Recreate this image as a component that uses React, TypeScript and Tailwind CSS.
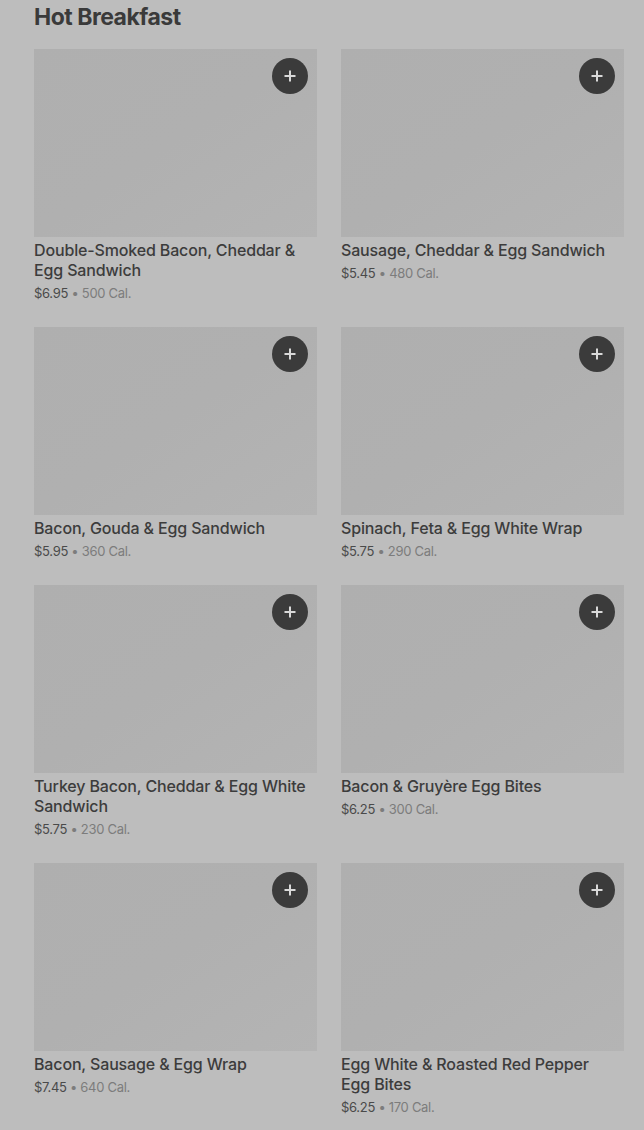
const items = [
  { name: 'Double-Smoked Bacon, Cheddar & Egg Sandwich', price: '$6.95', cal: '500 Cal.' },
  { name: 'Sausage, Cheddar & Egg Sandwich', price: '$5.45', cal: '480 Cal.' },
  { name: 'Bacon, Gouda & Egg Sandwich', price: '$5.95', cal: '360 Cal.' },
  { name: 'Spinach, Feta & Egg White Wrap', price: '$5.75', cal: '290 Cal.' },
  { name: 'Turkey Bacon, Cheddar & Egg White Sandwich', price: '$5.75', cal: '230 Cal.' },
  { name: 'Bacon & Gruyère Egg Bites', price: '$6.25', cal: '300 Cal.' },
  { name: 'Bacon, Sausage & Egg Wrap', price: '$7.45', cal: '640 Cal.' },
  { name: 'Egg White & Roasted Red Pepper Egg Bites', price: '$6.25', cal: '170 Cal.' },
]

function PlusIcon() {
  return (
    <svg width="14" height="14" viewBox="0 0 14 14" fill="none">
      <path d="M7 1.5v11M1.5 7h11" stroke="#d9d9d9" strokeWidth="2" />
    </svg>
  )
}

function ItemCard({ name, price, cal }: { name: string; price: string; cal: string }) {
  return (
    <div className="flex flex-col">
      <div className="relative h-[188px] w-full bg-gradient-to-br from-[#afafaf] via-[#b0b0b0] to-[#b4b4b4]">
        <button
          type="button"
          className="absolute right-[9px] top-[9px] flex h-9 w-9 items-center justify-center rounded-full bg-[#3b3b3b]"
        >
          <PlusIcon />
        </button>
      </div>
      <div className="mt-[3px] pr-[6px] text-[16px] font-medium leading-5 tracking-[-0.15px] text-[#3c3c3c]">
        {name}
      </div>
      <div className="mt-[3px] text-[13px] leading-5 tracking-[-0.3px] text-[#4a4a4a]">
        {price}
        <span className="text-[#7c7c7c]"> • {cal}</span>
      </div>
    </div>
  )
}

export default function App() {
  return (
    <div
      className="min-h-[1130px] w-full overflow-hidden bg-[#bdbdbd] pl-[34px] pr-[20px]"
      style={{ fontFamily: 'Inter, "Noto Sans", sans-serif' }}
    >
      <h2 className="pt-px text-[23px] font-bold leading-8 tracking-[-0.5px] text-[#3a3a3a]">Hot Breakfast</h2>
      <div className="mt-4 grid grid-cols-2 gap-x-6 gap-y-6">
        {items.map((it) => (
          <ItemCard key={it.name} {...it} />
        ))}
      </div>
    </div>
  )
}
